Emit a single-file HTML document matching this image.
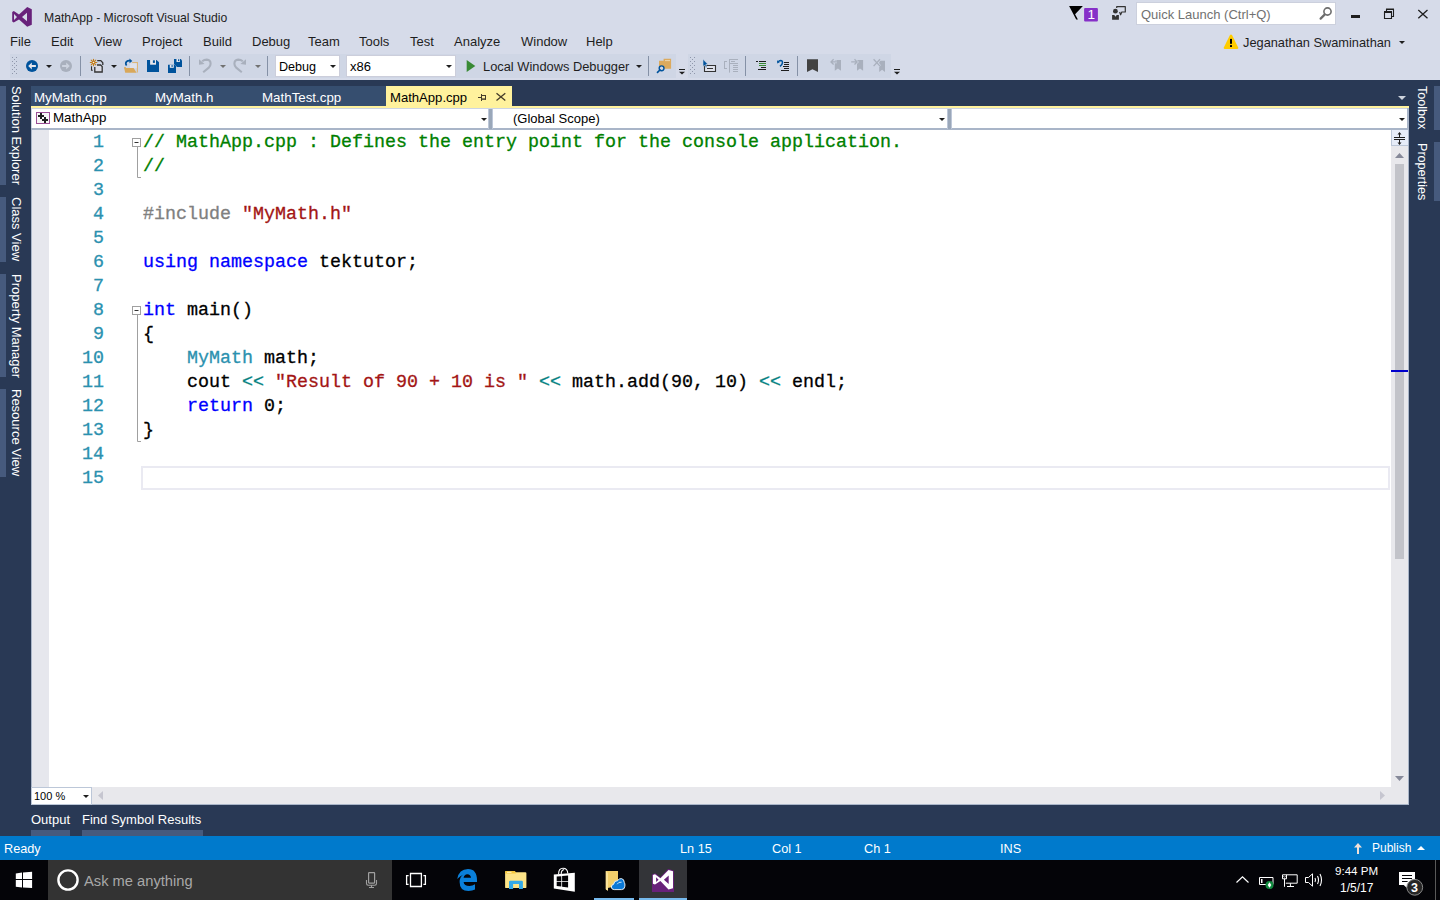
<!DOCTYPE html>
<html><head><meta charset="utf-8">
<style>
*{margin:0;padding:0;box-sizing:border-box}
html,body{width:1440px;height:900px;overflow:hidden;background:#d6dbe9;font-family:"Liberation Sans",sans-serif;font-size:13px;color:#1e1e1e}
.a{position:absolute}
svg{position:absolute;overflow:visible}
.t{position:absolute;white-space:nowrap;line-height:16px}
.vt{position:absolute;color:#fff;white-space:nowrap;transform-origin:0 0;transform:rotate(90deg);line-height:16px;font-size:13px}
.vbar{position:absolute;background:#465a7d;width:6px}
.code{position:absolute;left:143px;font-family:"Liberation Mono",monospace;font-size:18.33px;line-height:24px;white-space:pre;color:#000;-webkit-text-stroke:0.3px currentColor}
.ln{position:absolute;left:49px;width:55px;text-align:right;font-family:"Liberation Mono",monospace;font-size:18.33px;line-height:24px;color:#2b91af;-webkit-text-stroke:0.3px currentColor}
.cm{color:#008000}.kw{color:#0000ff}.st{color:#a31515}.pp{color:#808080}.ty{color:#2b91af}.op{color:#008080}
.sep{position:absolute;width:1px;height:20px;top:56px;background:#8591a2}
.dd{position:absolute;width:0;height:0;border-left:3px solid transparent;border-right:3px solid transparent;border-top:3px solid #1e1e1e}
.ddg{border-top-color:#717171}
</style></head><body>
<!-- ============ TITLE BAR ============ -->
<svg style="left:12px;top:7px" width="20" height="20" viewBox="0 0 20 20"><path fill="#68217a" fill-rule="evenodd" d="M15.2 0 L19.8 2.2 V17.7 L15.2 19.7 L7 12.4 L1.7 15.5 L0.2 14.5 V5 L1.8 4 L7 7.6 Z M2 7 V13 L5 10 Z M15 5.8 V14.2 L10 10 Z"/></svg>
<div class="t" style="left:44px;top:10px;font-size:12.2px">MathApp - Microsoft Visual Studio</div>

<!-- notifications flag -->
<svg style="left:1060px;top:0" width="380" height="30" viewBox="1060 0 380 30">
<path d="M1069.1 6.1 H1082.9 L1075.1 14.2 L1077.9 19.6 H1076.2 Z" fill="#000"/>
<rect x="1084.1" y="8" width="13.8" height="13.6" rx="1" fill="#8630c8"/>
<!-- feedback -->
<circle cx="1115.4" cy="11.2" r="2.4" fill="#333"/>
<path d="M1112.1 15.1 H1114.3 L1115.5 16.8 L1116.7 15.1 H1118.9 V19.8 H1112.1 Z" fill="#333"/>
<path d="M1116.7 7.9 V6.7 H1125.3 V12 H1121.8 L1120.6 14.8 L1119.6 12" fill="none" stroke="#333" stroke-width="1.2" stroke-linejoin="round"/>
<!-- window buttons -->
<rect x="1351" y="15" width="9" height="3" fill="#1e1e1e"/>
<path d="M1384.5 12.5 H1391.5 V18.5 H1384.5 Z M1386.5 12 V9.5 H1393.5 V16.5 H1391.5" fill="none" stroke="#1e1e1e" stroke-width="1.1"/><path d="M1384 11.5 H1392 M1386 9 H1394" stroke="#1e1e1e" stroke-width="1.2"/>
<path d="M1418.3 10 L1427.5 18.2 M1427.5 10 L1418.3 18.2" stroke="#1e1e1e" stroke-width="1.3"/>
</svg>
<div class="t" style="left:1087.5px;top:7px;color:#fff;font-size:13.5px">1</div>
<!-- quick launch -->
<div class="a" style="left:1136px;top:2px;width:200px;height:23px;background:#fff;border:1px solid #ccd0dd"></div>
<div class="t" style="left:1141px;top:7px;color:#717171">Quick Launch (Ctrl+Q)</div>
<svg style="left:1300px;top:0" width="40" height="30" viewBox="1300 0 40 30"><circle cx="1327.5" cy="11.5" r="3.6" fill="none" stroke="#6d6d6d" stroke-width="1.6"/><path d="M1324.6 14.6 L1320.6 18.6" stroke="#6d6d6d" stroke-width="2.2" stroke-linecap="round"/></svg>

<!-- ============ MENU ============ -->
<div class="t" style="left:10px;top:33.6px">File</div>
<div class="t" style="left:51px;top:33.6px">Edit</div>
<div class="t" style="left:94px;top:33.6px">View</div>
<div class="t" style="left:142px;top:33.6px">Project</div>
<div class="t" style="left:203px;top:33.6px">Build</div>
<div class="t" style="left:252px;top:33.6px">Debug</div>
<div class="t" style="left:308px;top:33.6px">Team</div>
<div class="t" style="left:359px;top:33.6px">Tools</div>
<div class="t" style="left:410px;top:33.6px">Test</div>
<div class="t" style="left:454px;top:33.6px">Analyze</div>
<div class="t" style="left:521px;top:33.6px">Window</div>
<div class="t" style="left:586px;top:33.6px">Help</div>

<svg style="left:1220px;top:30px" width="22" height="22" viewBox="1220 30 22 22"><path d="M1230 35 Q1231 34 1232 35 L1238.2 47.6 Q1238.6 48.9 1237.4 48.9 H1224.6 Q1223.4 48.9 1223.8 47.6 Z" fill="#ffcc00"/><rect x="1230" y="38.9" width="2" height="4.9" fill="#000"/><rect x="1230" y="45.1" width="2" height="1.9" fill="#000"/></svg>
<div class="t" style="left:1243px;top:35px;font-size:12.8px">Jeganathan Swaminathan</div>
<div class="dd" style="left:1399px;top:41px"></div>

<!-- ============ TOOLBAR ============ -->
<div class="a" style="left:10px;top:54px;width:666px;height:24px;background:#cfd6e5"></div>
<div class="a" style="left:688px;top:54px;width:203px;height:24px;background:#cfd6e5"></div>
<div class="a" style="left:275px;top:55px;width:65px;height:22px;background:#fff;border:1px solid #cccedb"></div>
<div class="t" style="left:279px;top:58.6px;color:#000;font-size:12.6px">Debug</div>
<div class="a" style="left:346px;top:55px;width:110px;height:22px;background:#fff;border:1px solid #cccedb"></div>
<div class="t" style="left:350px;top:58.6px;color:#000">x86</div>
<div class="t" style="left:483px;top:58.6px;font-size:12.85px">Local Windows Debugger</div>
<svg style="left:0;top:50px" width="910" height="30" viewBox="0 50 910 30">
<!-- grips -->
<g fill="#8f97ab">
<rect x="12" y="57" width="1" height="1"/><rect x="16" y="57" width="1" height="1"/><rect x="14" y="59" width="1" height="1"/><rect x="12" y="61" width="1" height="1"/><rect x="16" y="61" width="1" height="1"/><rect x="14" y="63" width="1" height="1"/><rect x="12" y="65" width="1" height="1"/><rect x="16" y="65" width="1" height="1"/><rect x="14" y="67" width="1" height="1"/><rect x="12" y="69" width="1" height="1"/><rect x="16" y="69" width="1" height="1"/><rect x="14" y="71" width="1" height="1"/><rect x="12" y="73" width="1" height="1"/><rect x="16" y="73" width="1" height="1"/>
<rect x="690" y="57" width="1" height="1"/><rect x="694" y="57" width="1" height="1"/><rect x="692" y="59" width="1" height="1"/><rect x="690" y="61" width="1" height="1"/><rect x="694" y="61" width="1" height="1"/><rect x="692" y="63" width="1" height="1"/><rect x="690" y="65" width="1" height="1"/><rect x="694" y="65" width="1" height="1"/><rect x="692" y="67" width="1" height="1"/><rect x="690" y="69" width="1" height="1"/><rect x="694" y="69" width="1" height="1"/><rect x="692" y="71" width="1" height="1"/><rect x="690" y="73" width="1" height="1"/><rect x="694" y="73" width="1" height="1"/>
</g>
<!-- separators -->
<g fill="#8591a6"><rect x="80" y="56" width="1" height="20"/><rect x="189" y="56" width="1" height="20"/><rect x="267" y="56" width="1" height="20"/><rect x="648" y="56" width="1" height="20"/><rect x="745" y="56" width="1" height="20"/><rect x="797" y="56" width="1" height="20"/></g>
<!-- dropdown arrows -->
<g fill="#1e1e1e"><path d="M46 65 H52 L49 68 Z"/><path d="M111 65 H117 L114 68 Z"/><path d="M330 65 H336 L333 68 Z"/><path d="M446 65 H452 L449 68 Z"/><path d="M636 65 H642 L639 68 Z"/></g>
<g fill="#717171"><path d="M220 65 H226 L223 68 Z"/><path d="M255 65 H261 L258 68 Z"/></g>
<!-- back -->
<circle cx="32" cy="66" r="6" fill="#00539c"/>
<path d="M28.2 66 L31.8 62.6 V65 H35.9 V67 H31.8 V69.4 Z" fill="#e6e7ed"/>
<!-- forward -->
<circle cx="66" cy="66" r="6" fill="#a9b0bd"/>
<path d="M69.8 66 L66.2 62.6 V65 H62.1 V67 H66.2 V69.4 Z" fill="#cdd3df"/>
<!-- new project -->
<g stroke="#c27d1a" stroke-width="1.1" stroke-linecap="round"><path d="M93.5 59.2 V65.7 M90.3 62.45 H96.8 M91.2 60.1 L95.8 64.8 M95.8 60.1 L91.2 64.8"/></g>
<circle cx="93.5" cy="62.45" r="1.8" fill="#c27d1a"/><circle cx="93.5" cy="62.45" r="0.8" fill="#f5f0e6"/>
<path d="M97.2 60.6 H100.8 L102.8 62.7 V65" fill="none" stroke="#333" stroke-width="1.3"/>
<path d="M94.8 67 V72 H102.2 V66.6 L100.6 65 H97" fill="#dcdde6" stroke="#333" stroke-width="1.3"/>
<path d="M91.5 66.3 V70.3 H92.8" fill="none" stroke="#333" stroke-width="1.1"/>
<!-- open -->
<path d="M132.2 62.6 H137.4 V72.6" fill="none" stroke="#dcb67a" stroke-width="1.2"/>
<rect x="130" y="63.2" width="6.8" height="5" fill="#dfe2ec"/>
<path d="M124.2 68.1 H133.6 L136.6 72.7 H125.2 Z" fill="#d9a85a"/>
<rect x="124.2" y="67" width="1.6" height="1.5" fill="#d9a85a"/>
<path d="M126.6 65.5 Q125 63.5 126.5 61.6 Q127.8 60.4 130 60.6" fill="none" stroke="#00539c" stroke-width="1.7"/>
<path d="M129.5 58.6 L132.3 60.9 L129.5 63.2 Z" fill="#00539c"/>
<!-- save -->
<path d="M147 60 H156.5 L159 62.2 V72 H147 Z" fill="#00539c"/>
<rect x="150.1" y="60" width="5.9" height="4.7" fill="#e6e7ed"/>
<rect x="152.9" y="60.3" width="2" height="2.6" fill="#00539c"/>
<!-- save all -->
<path d="M174 59 H180.8 L182 60.4 V67 H174 Z" fill="#00539c"/>
<rect x="176.5" y="59" width="3.4" height="3" fill="#e6e7ed"/><rect x="178" y="59.3" width="1.2" height="1.8" fill="#00539c"/>
<path d="M174.2 64.6 L176.8 67.2" stroke="#cfd6e5" stroke-width="1"/>
<path d="M168 64.8 H174.8 L176 66 V73 H168 Z" fill="#00539c"/>
<rect x="169.8" y="64.8" width="4" height="3" fill="#e6e7ed"/><rect x="171.5" y="65.1" width="1.2" height="1.8" fill="#00539c"/>
<!-- undo -->
<path d="M202.2 61.3 Q204.2 59.6 206.8 59.6 Q210.6 59.8 210.6 63.8 Q210.6 66 208.8 67.6 L203.2 72.2" fill="none" stroke="#a9b0bd" stroke-width="2.1"/>
<path d="M199 59.2 V64.8 L204.6 64.1 Z" fill="#a9b0bd"/>
<!-- redo -->
<path d="M242.8 61.3 Q240.8 59.6 238.2 59.6 Q234.4 59.8 234.4 63.8 Q234.4 66 236.2 67.6 L241.8 72.2" fill="none" stroke="#a9b0bd" stroke-width="2.1"/>
<path d="M246 59.2 V64.8 L240.4 64.1 Z" fill="#a9b0bd"/>
<!-- play -->
<path d="M466.7 60 L475.3 66 L466.7 72 Z" fill="#388a34"/>
<!-- find in files -->
<path d="M659 60.7 H663.6 V58.8 H671.1 V68.7 H659 Z" fill="#dcaa5e"/>
<rect x="665" y="60.2" width="5" height="0.9" fill="#f0dcb8"/>
<circle cx="661.6" cy="68.3" r="2.4" fill="#cfd6e5" stroke="#00539c" stroke-width="1.4"/>
<path d="M659.9 70 L657.5 72.3" stroke="#00539c" stroke-width="1.7" stroke-linecap="round"/>
<!-- overflow 1 -->
<rect x="676" y="54" width="12" height="24" fill="#d6dbe9"/>
<rect x="679" y="69" width="6" height="1" fill="#1e1e1e"/><path d="M679 71.8 H685 L682 74.6 Z" fill="#1e1e1e"/>
<!-- step into (cursor + box) -->
<path d="M704.5 65.5 H715.5 V71.5 H704.5 Z" fill="#dfe2ec" stroke="#333" stroke-width="1.1"/>
<rect x="707" y="68" width="6" height="1" fill="#333"/>
<path d="M703 59.2 V66.6 L704.6 65 L705.9 67.6 L707 67.1 L705.8 64.6 L708 64.4 Z" fill="#00539c" stroke="#cfd6e5" stroke-width="0.6"/>
<!-- gray grid icon -->
<g fill="#a9b0bd"><rect x="724" y="61" width="1" height="7.5"/><rect x="724" y="61" width="3" height="1"/><rect x="724" y="68" width="3" height="1"/><rect x="729" y="59" width="1" height="13.6"/><rect x="729" y="59" width="9" height="1"/><rect x="731" y="61" width="4" height="1"/><rect x="729" y="63" width="9" height="1"/><rect x="733" y="65" width="5" height="1"/><rect x="733" y="67" width="5" height="1"/><rect x="733" y="69" width="5" height="1"/><rect x="733" y="71" width="5" height="1"/></g>
<!-- comment icon -->
<g><rect x="756" y="61" width="2" height="1" fill="#1e1e1e"/><rect x="759" y="61" width="7" height="1" fill="#1e1e1e"/><rect x="759" y="63" width="7" height="1" fill="#388a34"/><rect x="759" y="65" width="7" height="1" fill="#388a34"/><rect x="761" y="67" width="5" height="1" fill="#1e1e1e"/><rect x="758" y="69" width="8" height="1" fill="#1e1e1e"/></g>
<!-- uncomment icon -->
<path d="M778.3 61.8 Q779 60.5 780.6 60.5 Q782.5 60.6 782.5 62.6 Q782.3 64.6 780 66.4" fill="none" stroke="#00539c" stroke-width="1.5"/>
<path d="M777 60.2 L777.2 63.6 L779.8 62.2 Z" fill="#00539c"/>
<g fill="#1e1e1e"><rect x="784" y="62" width="5" height="1"/><rect x="784" y="64" width="5" height="1"/><rect x="783" y="66" width="6" height="1"/><rect x="784" y="68" width="5" height="1"/><rect x="781" y="70" width="8" height="1"/></g>
<!-- bookmark -->
<path d="M807 59.2 H818 V72 L812.5 69.2 L807 72 Z" fill="#424242"/>
<!-- prev/next/clear bookmark -->
<g fill="#a9b0bd">
<path d="M834.8 60 H841 V70.8 L837.9 68.6 L834.8 70.8 Z"/>
<path d="M857 60 H863.1 V70.8 L860 68.6 L857 70.8 Z"/>
<path d="M879.2 60.8 H885 V71.9 L882.1 69.7 L879.2 71.9 Z"/>
</g>
<g stroke="#cfd6e5" stroke-width="2.6" fill="none"><path d="M836.9 61.9 H831.2 M833.6 59.3 L831 61.9 L833.6 64.5"/><path d="M851.2 61.9 H856.9 M854.5 59.3 L857.1 61.9 L854.5 64.5"/><path d="M873.6 59.2 L880 66.1 M880 59.2 L873.6 66.1"/></g>
<g stroke="#a9b0bd" stroke-width="1.3" fill="none"><path d="M836.9 61.9 H831.2 M833.6 59.3 L831 61.9 L833.6 64.5"/><path d="M851.2 61.9 H856.9 M854.5 59.3 L857.1 61.9 L854.5 64.5"/><path d="M873.6 59.2 L880 66.1 M880 59.2 L873.6 66.1"/></g>
<!-- overflow 2 -->
<rect x="891" y="54" width="11" height="24" fill="#d6dbe9"/>
<rect x="894" y="69" width="6" height="1" fill="#1e1e1e"/><path d="M894 71.8 H900 L897 74.6 Z" fill="#1e1e1e"/>
</svg>

<!-- ============ DARK AREA ============ -->
<div class="a" style="left:0;top:80px;width:1440px;height:756px;background:#293955"></div>

<!-- left autohide -->
<div class="vbar" style="left:0;top:86px;height:99px"></div>
<div class="vbar" style="left:0;top:197px;height:65px"></div>
<div class="vbar" style="left:0;top:274px;height:103px"></div>
<div class="vbar" style="left:0;top:389px;height:88px"></div>
<div class="vt" style="left:24px;top:86px">Solution Explorer</div>
<div class="vt" style="left:24px;top:197px">Class View</div>
<div class="vt" style="left:24px;top:274px">Property Manager</div>
<div class="vt" style="left:24px;top:389px">Resource View</div>

<!-- right autohide -->
<div class="vbar" style="left:1434px;top:86px;height:44px"></div>
<div class="vbar" style="left:1434px;top:142px;height:59px"></div>
<div class="vt" style="left:1430px;top:85.5px;font-size:12.6px">Toolbox</div>
<div class="vt" style="left:1430px;top:142.5px;font-size:12.6px">Properties</div>

<!-- tabs -->
<div class="a" style="left:31px;top:86px;width:355px;height:20px;background:#364e6f"></div>
<div class="t" style="left:34px;top:89.5px;color:#fff;font-size:13.33px">MyMath.cpp</div>
<div class="t" style="left:155px;top:89.5px;color:#fff;font-size:13.33px">MyMath.h</div>
<div class="t" style="left:262px;top:89.5px;color:#fff;font-size:13.33px">MathTest.cpp</div>
<div class="a" style="left:386px;top:86px;width:126px;height:20px;background:#fff29d"></div>
<div class="t" style="left:390px;top:89.5px;color:#000;font-size:13.1px">MathApp.cpp</div>
<svg style="left:470px;top:86px" width="42" height="20" viewBox="470 86 42 20"><g fill="#453d2a"><rect x="478" y="97" width="3.5" height="1"/><rect x="481" y="94" width="1" height="7"/><rect x="481" y="95" width="5" height="1"/><rect x="485" y="95" width="1" height="4.7"/><rect x="481" y="98.4" width="5" height="1.4"/></g><path d="M496.5 93.2 L505.3 100.6 M505.3 93.2 L496.5 100.6" stroke="#453d2a" stroke-width="1.3"/></svg>
<svg style="left:1398px;top:96px" width="8" height="4" viewBox="0 0 8 4"><path d="M0 0 H8 L4 4 Z" fill="#ced4dd"/></svg>
<div class="a" style="left:31px;top:106px;width:1378px;height:2px;background:#fff29d"></div>

<!-- nav bar -->
<div class="a" style="left:31px;top:108px;width:1378px;height:697px;background:#a9b5c8"></div><div class="a" style="left:31px;top:108px;width:1376px;height:20px;background:#fff;border-top:1px solid #ccd5e4;border-left:1px solid #ccd5e4"></div>
<svg style="left:30px;top:108px" width="24" height="20" viewBox="30 108 24 20"><rect x="36.5" y="112.5" width="13" height="11" fill="#f6f6f6" stroke="#9b4f96" stroke-width="1"/><g fill="#1e1e1e"><rect x="38" y="115" width="6" height="2"/><rect x="40" y="113" width="2" height="6"/><rect x="42" y="119" width="6" height="2"/><rect x="44" y="117" width="2" height="6"/></g></svg>
<div class="t" style="left:53px;top:110px;color:#000;font-size:13.33px">MathApp</div>
<div class="dd" style="left:481px;top:118px"></div>
<div class="a" style="left:488px;top:109px;width:5px;height:20px;background:#9aa7b9;border-left:1px solid #bdc7d8;border-right:1px solid #bdc7d8"></div>
<div class="t" style="left:513px;top:110.5px;color:#000;font-size:13px">(Global Scope)</div>
<div class="dd" style="left:939px;top:118px"></div>
<div class="a" style="left:947px;top:109px;width:5px;height:20px;background:#9aa7b9;border-left:1px solid #bdc7d8;border-right:1px solid #bdc7d8"></div>
<div class="dd" style="left:1399px;top:118px"></div>

<!-- editor -->
<div class="a" style="left:32px;top:130px;width:1359px;height:657px;background:#fff"></div>
<div class="a" style="left:32px;top:130px;width:17px;height:657px;background:#e6e7ed"></div>
<div class="a" style="left:1391px;top:130px;width:17px;height:674px;background:#e8e8ec"></div>
<div class="a" style="left:1391px;top:130px;width:17px;height:16px;background:#e6ecf8;border-left:1px solid #bcc7d8;border-bottom:1px solid #bcc7d8"></div>
<svg style="left:1390px;top:128px" width="20" height="20" viewBox="1390 128 20 20"><path d="M1394 137.5 H1405 M1394 139.5 H1405 M1399.5 133.5 V137 M1399.5 140 V143.5" stroke="#1e1e1e" stroke-width="1"/><path d="M1397.5 134.5 L1399.5 132 L1401.5 134.5 Z M1397.5 142.5 L1399.5 145 L1401.5 142.5 Z" fill="#1e1e1e"/></svg>
<svg style="left:1395px;top:153px" width="9" height="5" viewBox="0 0 9 5"><path d="M0 5 L4.5 0 L9 5 Z" fill="#868999"/></svg>
<div class="a" style="left:1395px;top:164px;width:9px;height:395px;background:#c2c3c9"></div>
<svg style="left:1395px;top:776px" width="9" height="5" viewBox="0 0 9 5"><path d="M0 0 L4.5 5 L9 0 Z" fill="#868999"/></svg>
<div class="a" style="left:1391px;top:370px;width:17px;height:2px;background:#0000cd"></div>
<div class="a" style="left:31px;top:787px;width:1360px;height:17px;background:#e8e8ec"></div>
<div class="a" style="left:31px;top:787px;width:61px;height:18px;background:#fff;border:1px solid #bcc7d8"></div>
<div class="t" style="left:34px;top:788px;color:#000;font-size:11px">100 %</div>
<div class="dd" style="left:83px;top:795px"></div>
<svg style="left:98px;top:791px" width="5" height="9" viewBox="0 0 5 9"><path d="M5 0 L0 4.5 L5 9 Z" fill="#c6c6d0"/></svg>
<svg style="left:1380px;top:791px" width="5" height="9" viewBox="0 0 5 9"><path d="M0 0 L5 4.5 L0 9 Z" fill="#c6c6d0"/></svg>

<!-- fold markers -->
<svg style="left:131px;top:137px" width="11" height="310" viewBox="0 0 11 310"><g fill="none" stroke="#a0a0a0" stroke-width="1"><rect x="1.5" y="1.5" width="8" height="8" fill="#fff"/><path d="M6.5 10 V40.5 H10"/><rect x="1.5" y="169.5" width="8" height="8" fill="#fff"/><path d="M6.5 178 V304.5 H10"/></g><path d="M3.5 5.5 H7.5 M3.5 173.5 H7.5" stroke="#333" stroke-width="1"/></svg>

<!-- current line box -->
<div class="a" style="left:141px;top:466px;width:1249px;height:24px;border:2px solid #eaeaf2"></div>

<div class="ln" style="top:131px">1<br>2<br>3<br>4<br>5<br>6<br>7<br>8<br>9<br>10<br>11<br>12<br>13<br>14<br>15</div>
<div class="code" style="top:131px"><span class="cm">// MathApp.cpp : Defines the entry point for the console application.</span>
<span class="cm">//</span>

<span class="pp">#include</span> <span class="st">"MyMath.h"</span>

<span class="kw">using</span> <span class="kw">namespace</span> tektutor;

<span class="kw">int</span> main()
{
    <span class="ty">MyMath</span> math;
    cout <span class="op">&lt;&lt;</span> <span class="st">"Result of 90 + 10 is "</span> <span class="op">&lt;&lt;</span> math.add(90, 10) <span class="op">&lt;&lt;</span> endl;
    <span class="kw">return</span> 0;
}

</div>

<!-- output tabs -->
<div class="t" style="left:31px;top:812px;color:#fff;font-size:13px">Output</div>
<div class="t" style="left:82px;top:812px;color:#fff;font-size:13px">Find Symbol Results</div>
<div class="a" style="left:31px;top:830px;width:39px;height:6px;background:#465a7d"></div>
<div class="a" style="left:82px;top:830px;width:121px;height:6px;background:#465a7d"></div>

<!-- ============ STATUS BAR ============ -->
<div class="a" style="left:0;top:836px;width:1440px;height:24px;background:#007acc"></div>
<div class="t" style="left:4px;top:840.6px;color:#fff;font-size:12.7px">Ready</div>
<div class="t" style="left:680px;top:840.6px;color:#fff;font-size:12.7px">Ln 15</div>
<div class="t" style="left:772px;top:840.6px;color:#fff;font-size:12.7px">Col 1</div>
<div class="t" style="left:864px;top:840.6px;color:#fff;font-size:12.7px">Ch 1</div>
<div class="t" style="left:1000px;top:840.6px;color:#fff;font-size:12.7px">INS</div>
<svg style="left:1354px;top:843px" width="8" height="11" viewBox="0 0 8 11"><path d="M4 0 L8 4.5 H5 V11 H3 V4.5 H0 Z" fill="#f0e0d8"/></svg>
<div class="t" style="left:1372px;top:840px;color:#fff;font-size:12px">Publish</div>
<svg style="left:1417px;top:846px" width="8" height="4" viewBox="0 0 8 4"><path d="M0 4 L4 0 L8 4 Z" fill="#fff"/></svg>

<!-- ============ TASKBAR ============ -->
<div class="a" style="left:0;top:860px;width:1440px;height:40px;background:#040408"></div>
<svg style="left:10px;top:866px" width="30" height="28" viewBox="10 866 30 28"><path d="M15.8 873.4 L22 872.6 V879 H15.8 Z M23 872.4 L32.1 871.8 V879 H23 Z M15.8 880 H22 V887.4 L15.8 886.7 Z M23 880 H32.1 V888.1 L23 887.5 Z" fill="#fff"/></svg>
<div class="a" style="left:48px;top:860px;width:344px;height:40px;background:#333"></div>
<svg style="left:57px;top:869px" width="22" height="22" viewBox="0 0 22 22"><circle cx="11" cy="11" r="9.6" fill="none" stroke="#fff" stroke-width="2.4"/></svg>
<div class="t" style="left:84px;top:872.8px;color:#a8a8a8;font-size:14.7px;line-height:17px">Ask me anything</div>
<svg style="left:356px;top:866px" width="32" height="28" viewBox="356 866 32 28"><path d="M369.1 872.7 H374.1 Q374.6 872.7 374.6 873.2 V882.6 Q374.6 883.1 374.1 883.1 H369.1 Q368.6 883.1 368.6 882.6 V873.2 Q368.6 872.7 369.1 872.7 Z" fill="none" stroke="#a0a0a0" stroke-width="1.2"/><path d="M366.5 880 V883.5 Q366.5 885.2 368.2 885.2 H374.8 Q376.5 885.2 376.5 883.5 V880 M371.5 885.2 V887.5 M369 887.5 H374" fill="none" stroke="#a0a0a0" stroke-width="1.1"/></svg>
<!-- task view -->
<svg style="left:400px;top:866px" width="32" height="28" viewBox="400 866 32 28"><path d="M410.5 873.5 H421.4 V886.5 H410.5 Z M408.6 875.6 H406.6 V884.3 H408.6 M423.4 875.6 H425.4 V884.3 H423.4" fill="none" stroke="#fff" stroke-width="1.3"/></svg>
<!-- edge / explorer / store / onedrive -->
<svg style="left:440px;top:860px" width="200" height="40" viewBox="440 860 200 40">
<path d="M459.6 882 Q459.6 877 463.6 874.6 Q460.5 876 457.2 879 Q459 869 468 869 Q477 869 477 880.5 V882 H463.6 Q464 886 469.5 886 Q472.5 886 475 884.3 V889.6 Q472.5 891 468.5 891 Q459.6 891 459.6 882 Z" fill="#0a7fd9"/>
<path d="M463.6 877.8 Q464.3 874.2 467.3 874.2 Q470.6 874.2 471 877.8 Z" fill="#040408"/>
<path d="M505.1 872 Q505.1 871 506.1 871 H514.5 L515.8 872.2 H525.4 Q526.4 872.2 526.4 873.2 V887.2 Q526.4 888.1 525.4 888.1 H506.1 Q505.1 888.1 505.1 887.2 Z" fill="#fde488"/><path d="M505.1 872 Q505.1 871 506.1 871 H514.5 L515.8 872.2 V873.6 H505.1 Z" fill="#f5c83e"/><rect x="507" y="871.8" width="4.5" height="1" fill="#fff4c8"/><path d="M509 882 Q509 880.8 510.2 880.8 H521.7 Q522.9 880.8 522.9 882 V889 H519 V884 H513.1 V889 H509 Z" fill="#33aae8"/>
<path d="M558.6 874 Q558.6 868.3 563 868.3 Q567.6 868.3 567.8 873.5 M561.2 874 Q561.2 870 564.2 869.5" fill="none" stroke="#fff" stroke-width="1.1"/>
<path d="M553.8 874.4 L574.8 872.8 V891.8 L553.8 888.6 Z" fill="#fff"/>
<g fill="#040408"><path d="M556.7 876.6 L561.3 876.2 V881 H556.7 Z M562.1 876.1 L568.1 875.6 V881 H562.1 Z M556.7 881.8 H561.3 V886.6 L556.7 886.1 Z M562.1 881.8 H568.1 V887.4 L562.1 886.7 Z"/></g>
<path d="M605.8 871 H618 V886 L607.6 888 V890.8 L605.8 889.2 Z" fill="#f3cf6b"/>
<path d="M605.8 871 L608 873 V890.8 L605.8 889.2 Z" fill="#fbe39a"/>
<path d="M614.2 889.6 Q611.4 889.6 611.4 887 Q611.4 884.6 613.6 884.3 Q614 880.6 617.6 880.6 Q619 878.4 621.4 878.6 Q624.2 879 624.3 882.4 Q625.2 883.6 624.9 886.2 Q624.6 889.6 621.6 889.6 Z" fill="#0a78d6" stroke="#fff" stroke-width="0.9"/>
<path d="M617.2 884.2 Q618.5 881.6 621.6 882.2" fill="none" stroke="#fff" stroke-width="0.8"/>
</svg>
<div class="a" style="left:594px;top:898px;width:40px;height:2px;background:#76b9ed"></div>
<!-- VS active -->
<div class="a" style="left:639px;top:860px;width:48px;height:40px;background:#333438"></div>
<svg style="left:644px;top:864px" width="36" height="32" viewBox="644 864 36 32"><path d="M652.9 875 L655 874.3 L660.4 878.3 L668.5 869.9 L673 871.3 V888.2 L668.5 889.6 L660.4 881 L655 884.6 L652.9 883.8 Z" fill="#68217a" stroke="#68217a" stroke-width="1.8" stroke-linejoin="round"/><rect x="652" y="881" width="22" height="11" fill="#68217a"/><path fill="#fff" fill-rule="evenodd" d="M652.9 875 L655 874.3 L660.4 878.3 L668.5 869.9 L673 871.3 V888.2 L668.5 889.6 L660.4 881 L655 884.6 L652.9 883.8 Z M656.1 877.3 V882.1 L658.6 879.7 Z M668.7 875.6 V883.9 L663.9 879.7 Z"/></svg>
<div class="a" style="left:639px;top:898px;width:48px;height:2px;background:#76b9ed"></div>
<!-- tray -->
<svg style="left:1236px;top:876px" width="13" height="7" viewBox="0 0 13 7"><path d="M0.5 6.5 L6.5 0.8 L12.5 6.5" fill="none" stroke="#fff" stroke-width="1.2"/></svg>
<svg style="left:1259px;top:875px" width="16" height="14" viewBox="0 0 16 14"><path d="M0.5 2.5 H14 V9.5 H0.5 Z" fill="none" stroke="#fff" stroke-width="1"/><rect x="2" y="4" width="1.5" height="4" fill="#fff"/><circle cx="10.5" cy="10" r="4" fill="#10893e"/><path d="M10.5 7.3 L12.3 10 L10.5 12.8 L8.7 10 Z" fill="#fff"/></svg>
<svg style="left:1280px;top:870px" width="20" height="20" viewBox="1280 870 20 20"><path d="M1282.5 874.8 H1297.2 V883.2 H1285.8 M1282.5 874.8 V878.8 H1286.5 V874.8 M1284.5 878.8 V886.8 M1290.4 883.2 V886.2 M1287 886.5 H1294" fill="none" stroke="#fff" stroke-width="1"/><path d="M1283.4 876.2 L1284.5 877.3 L1285.6 876.2" fill="none" stroke="#fff" stroke-width="0.8"/></svg>
<svg style="left:1305px;top:873px" width="18" height="14" viewBox="0 0 18 14"><path d="M0.5 4.5 H3.5 L7.5 0.8 V13.2 L3.5 9.5 H0.5 Z" fill="none" stroke="#fff" stroke-width="1"/><path d="M10 5 Q11 7 10 9 M12.5 3 Q14.5 7 12.5 11 M15 1 Q18 7 15 13" fill="none" stroke="#fff" stroke-width="1.1"/></svg>
<div class="t" style="left:1335px;top:864px;color:#fff;font-size:11.6px;line-height:14px">9:44 PM</div>
<div class="t" style="left:1340px;top:881px;color:#fff;font-size:12px;line-height:14px">1/5/17</div>
<svg style="left:1392px;top:866px" width="34" height="34" viewBox="1392 866 34 34"><path d="M1399 872 H1415 V885 H1407.5 L1407.5 888.5 L1403.7 885 H1399 Z" fill="#fff"/><g stroke="#040408" stroke-width="1"><path d="M1402 875.5 H1412 M1402 878.5 H1412 M1402 881.5 H1407.6"/></g><circle cx="1414.75" cy="887.3" r="7.9" fill="#262626" stroke="#8a8a8a" stroke-width="1"/></svg>
<div class="t" style="left:1411px;top:880.5px;color:#fff;font-size:12.5px;line-height:14px;font-weight:bold">3</div>
<div class="a" style="left:1435px;top:860px;width:1px;height:40px;background:#595959"></div>
</body></html>
